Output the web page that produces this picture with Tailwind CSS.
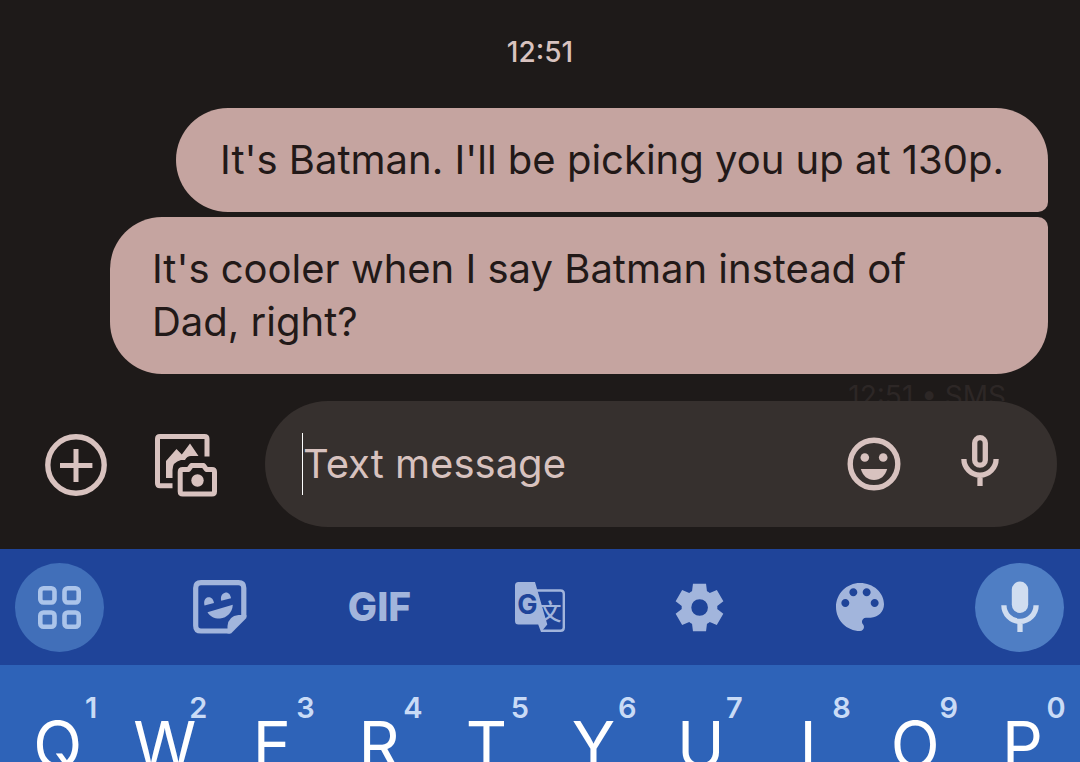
<!DOCTYPE html>
<html lang="en">
<head>
<meta charset="utf-8">
<meta name="viewport" content="width=device-width, initial-scale=1">
<title>Messages</title>
<script src="https://cdn.jsdelivr.net/npm/@tailwindcss/browser@4"></script>
</head>
<body class="flex h-screen flex-col overflow-hidden bg-[#1e1a19] font-['Inter',sans-serif]">

<!-- Conversation -->
<main class="flex shrink-0 flex-col items-end pr-8">
  <time class="mt-8 mb-9 -mr-8 self-stretch text-center text-[28px] leading-[40px] font-medium text-[#d8c2bf]">12:51</time>
  <p class="mb-[5px] rounded-[52px] rounded-br-[10px] bg-[#c5a4a0] px-[44px] pt-[25px] pb-[26px] text-[40px] leading-[53px] text-[#221918]">It's Batman. I'll be picking you up at 130p.</p>
  <p class="w-full max-w-[938px] rounded-[52px] rounded-tr-[10px] bg-[#c5a4a0] px-[42px] pt-[25px] pb-[26px] text-[40px] leading-[53px] text-[#221918]">It's cooler when I say Batman instead of<br>Dad, right?</p>
  <p class="h-[27px] overflow-hidden pt-1 pr-[42px] text-[28px] leading-[36px] text-[#2d2726]">12:51 • SMS</p>
</main>

<!-- Composer -->
<form class="mb-[22px] flex shrink-0 items-center pr-[23px] pl-[45px] text-[#d8c2bf]">
  <button type="button" aria-label="Add attachment" class="mr-12">
    <svg class="block h-[62px] w-[62px] overflow-visible" viewBox="0 0 62 62" fill="none" stroke="currentColor" stroke-width="5.4">
      <circle cx="31" cy="32" r="28.2"/><path d="M31 16v33M15 32.500h32.400" stroke-width="5"/>
    </svg>
  </button>
  <button type="button" aria-label="Gallery and camera" class="mr-12">
    <svg class="block h-[62px] w-[62px] overflow-visible" viewBox="0 -1 62 62" fill="none" stroke="currentColor" stroke-width="5" stroke-linejoin="round">
      <path d="M17.500 51.800H5Q2.500 51.800 2.500 49.300V5Q2.500 2.500 5 2.500H49.500Q52 2.500 52 5V22.500"/>
      <path d="M25.200 38V57.500Q25.200 60 27.700 60H57Q59.500 60 59.500 57.500V38Q59.500 35.500 57 35.500H51.500L48.500 31.500H36.500L33.500 35.500H27.700Q25.200 35.500 25.200 38Z"/>
      <circle cx="42.500" cy="46.500" r="6.200" fill="currentColor" stroke="none"/>
      <path stroke="none" fill="currentColor" d="M11 44V27L21.500 15L26.800 20.500L35 9.500L43.500 22H36Q32 22 30 26H26Q17.500 28 17.500 36V44Z"/>
    </svg>
  </button>
  <div class="flex h-[126px] min-w-0 flex-1 items-center rounded-full bg-[#36302e] pr-[58px] pl-[37px]">
    <span class="h-[62px] w-px bg-white"></span>
    <input type="text" aria-label="Text message" placeholder="Text message" class="h-[62px] min-w-0 flex-1 bg-transparent pb-0.5 text-[40px] outline-none placeholder:text-[#d8c2bf]">
    <button type="button" aria-label="Emoji" class="mr-[60px]">
      <svg class="block h-[54px] w-[54px]" viewBox="0 0 54 54" fill="currentColor">
        <circle cx="27" cy="27" r="23.800" fill="none" stroke="currentColor" stroke-width="5.400"/>
        <circle cx="17.800" cy="20.500" r="4.300"/><circle cx="36.200" cy="20.500" r="4.300"/>
        <path d="M13.800 32H40.200C38 39 33.500 43 27 43S16 39 13.800 32Z"/>
      </svg>
    </button>
    <button type="button" aria-label="Voice message">
      <svg class="block h-[58px] w-[38px]" viewBox="0 0 38 58" fill="none" stroke="currentColor" stroke-width="5.300">
        <rect x="13.700" y="2.700" width="10.600" height="27.500" rx="5.300"/>
        <path d="M2.900 24a16.100 16.100 0 0 0 32.200 0M19 40v11"/>
      </svg>
    </button>
  </div>
</form>

<!-- Keyboard toolbar -->
<nav aria-label="Keyboard tools" class="flex h-[116px] shrink-0 items-center justify-between bg-[#1f4499] pr-4 pl-[15px] text-[#a2b5dc]">
  <button type="button" aria-label="More tools" class="flex h-[89px] w-[89px] items-center justify-center rounded-full bg-[#416fb9] text-[#abc4ea]">
    <svg class="h-[43px] w-[43px]" viewBox="0 0 43 43" fill="none" stroke="currentColor" stroke-width="4.600">
      <rect x="2.300" y="2.300" width="14.200" height="14.200" rx="3.200"/><rect x="26.500" y="2.300" width="14.200" height="14.200" rx="3.200"/>
      <rect x="2.300" y="26.500" width="14.200" height="14.200" rx="3.200"/><rect x="26.500" y="26.500" width="14.200" height="14.200" rx="3.200"/>
    </svg>
  </button>
  <button type="button" aria-label="Stickers" class="flex h-[89px] w-[89px] items-center justify-center">
    <svg class="h-[54px] w-[54px]" viewBox="0 0 54 54" fill="currentColor">
      <path d="M37 51H8Q2.700 51 2.700 45.700V8Q2.700 2.700 8 2.700H45.500Q50.800 2.700 50.800 8V37" fill="none" stroke="currentColor" stroke-width="5.200"/>
      <path d="M53.400 38L38 53.600H34.500V46Q35.500 36 45.500 35H53.400Z"/>
      <path d="M11.500 25.500C10.500 21 12 18 15 17.300S20.500 19 21 23Z"/>
      <path d="M28.200 20.800C27.200 16.500 29 13.500 32 12.700S37.500 14.500 38 18.200Z"/>
      <path d="M14.500 32.200L39.800 24.700C39.500 32 34 37.800 27 38.600C21.500 38.800 17 36.500 14.500 32.200Z"/>
    </svg>
  </button>
  <button type="button" class="flex h-[89px] w-[89px] items-center justify-center text-[39px] font-extrabold">GIF</button>
  <button type="button" aria-label="Translate" class="flex h-[89px] w-[89px] items-center justify-center">
    <svg class="h-[50px] w-[50px]" viewBox="0 0 50 50" fill="currentColor">
      <path d="M22 8.500H45.500Q48.800 8.500 48.800 11.800V45.500Q48.800 48.800 45.500 48.800H26" fill="none" stroke="currentColor" stroke-width="2.400"/>
      <path d="M3.500 0H20L32.300 42.500L26 50L23.200 42.500H3.500Q0 42.500 0 39V3.500Q0 0 3.500 0Z"/>
      <text x="12.500" y="31.500" text-anchor="middle" font-family="Inter, sans-serif" font-size="27" font-weight="700" fill="#1f4499">G</text>
      <text x="35" y="38" text-anchor="middle" font-family="'Noto Sans CJK SC', sans-serif" font-size="23" font-weight="500">文</text>
    </svg>
  </button>
  <button type="button" aria-label="Settings" class="flex h-[89px] w-[89px] items-center justify-center">
    <svg class="h-[57px] w-[57px]" viewBox="0 0 24 24" fill="currentColor"><path d="m9.250 22-.4-3.200q-.325-.125-.612-.3-.288-.175-.563-.375L4.700 19.375l-2.750-4.750 2.575-1.950Q4.500 12.500 4.500 12.337v-.675q0-.162.025-.337L1.950 9.375l2.750-4.750 2.975 1.250q.275-.2.575-.375.3-.175.6-.3l.4-3.200h5.500l.4 3.200q.325.125.613.3.287.175.562.375l2.975-1.250 2.750 4.750-2.575 1.950q.025.175.025.337v.675q0 .163-.05.338l2.575 1.950-2.750 4.750-2.950-1.250q-.275.2-.575.375-.3.175-.6.3l-.4 3.200Zm2.800-6.500q1.450 0 2.475-1.025Q15.550 13.450 15.550 12q0-1.450-1.025-2.475Q13.500 8.500 12.050 8.500q-1.475 0-2.488 1.025Q8.550 10.550 8.550 12q0 1.450 1.012 2.475Q10.575 15.500 12.050 15.500Z"/></svg>
  </button>
  <button type="button" aria-label="Themes" class="flex h-[89px] w-[89px] items-center justify-center">
    <svg class="h-[64px] w-[64px]" viewBox="0 0 24 24" fill="currentColor"><path d="M12 3c-4.970 0-9 4.030-9 9s4.030 9 9 9c.83 0 1.500-.67 1.500-1.500 0-.39-.15-.74-.39-1.010-.23-.26-.38-.61-.38-.99 0-.83.67-1.500 1.500-1.500H16c2.760 0 5-2.240 5-5 0-4.420-4.030-8-9-8zm-5.500 9c-.83 0-1.500-.67-1.500-1.500S5.670 9 6.500 9 8 9.670 8 10.500 7.330 12 6.500 12zm3-4C8.670 8 8 7.330 8 6.500S8.670 5 9.500 5s1.500.67 1.500 1.500S10.330 8 9.500 8zm5 0c-.83 0-1.500-.67-1.500-1.500S13.670 5 14.500 5s1.500.67 1.500 1.500S15.330 8 14.500 8zm3 4c-.83 0-1.500-.67-1.500-1.500S16.670 9 17.500 9s1.500.67 1.500 1.500-.67 1.500-1.500 1.500z"/></svg>
  </button>
  <button type="button" aria-label="Voice typing" class="flex h-[89px] w-[89px] items-center justify-center rounded-full bg-[#4f7ec4] text-[#d0ddf0]">
    <svg class="h-[52px] w-[38px]" viewBox="0 0 38 52" fill="none" stroke="currentColor" stroke-width="5.300">
      <rect x="10.800" y="0.500" width="16.400" height="31.500" rx="8.200" fill="currentColor" stroke="none"/>
      <path d="M2.900 24.300a16.100 16.100 0 0 0 32.200 0M19 40v11"/>
    </svg>
  </button>
</nav>

<!-- Top letter row -->
<section aria-label="Keyboard" class="grid shrink-0 grid-cols-10 bg-[#2e63b8] px-1 pt-[25px] pb-4 text-[64px] leading-[110px] text-white">
  <button type="button" class="relative">Q<sup class="absolute top-0 right-2 w-6 text-center text-[29px] leading-[36px] font-semibold text-[#c9dbf6]">1</sup></button>
  <button type="button" class="relative">W<sup class="absolute top-0 right-2 w-6 text-center text-[29px] leading-[36px] font-semibold text-[#c9dbf6]">2</sup></button>
  <button type="button" class="relative">E<sup class="absolute top-0 right-2 w-6 text-center text-[29px] leading-[36px] font-semibold text-[#c9dbf6]">3</sup></button>
  <button type="button" class="relative">R<sup class="absolute top-0 right-2 w-6 text-center text-[29px] leading-[36px] font-semibold text-[#c9dbf6]">4</sup></button>
  <button type="button" class="relative">T<sup class="absolute top-0 right-2 w-6 text-center text-[29px] leading-[36px] font-semibold text-[#c9dbf6]">5</sup></button>
  <button type="button" class="relative">Y<sup class="absolute top-0 right-2 w-6 text-center text-[29px] leading-[36px] font-semibold text-[#c9dbf6]">6</sup></button>
  <button type="button" class="relative">U<sup class="absolute top-0 right-2 w-6 text-center text-[29px] leading-[36px] font-semibold text-[#c9dbf6]">7</sup></button>
  <button type="button" class="relative">I<sup class="absolute top-0 right-2 w-6 text-center text-[29px] leading-[36px] font-semibold text-[#c9dbf6]">8</sup></button>
  <button type="button" class="relative">O<sup class="absolute top-0 right-2 w-6 text-center text-[29px] leading-[36px] font-semibold text-[#c9dbf6]">9</sup></button>
  <button type="button" class="relative">P<sup class="absolute top-0 right-2 w-6 text-center text-[29px] leading-[36px] font-semibold text-[#c9dbf6]">0</sup></button>
</section>
</body>
</html>
